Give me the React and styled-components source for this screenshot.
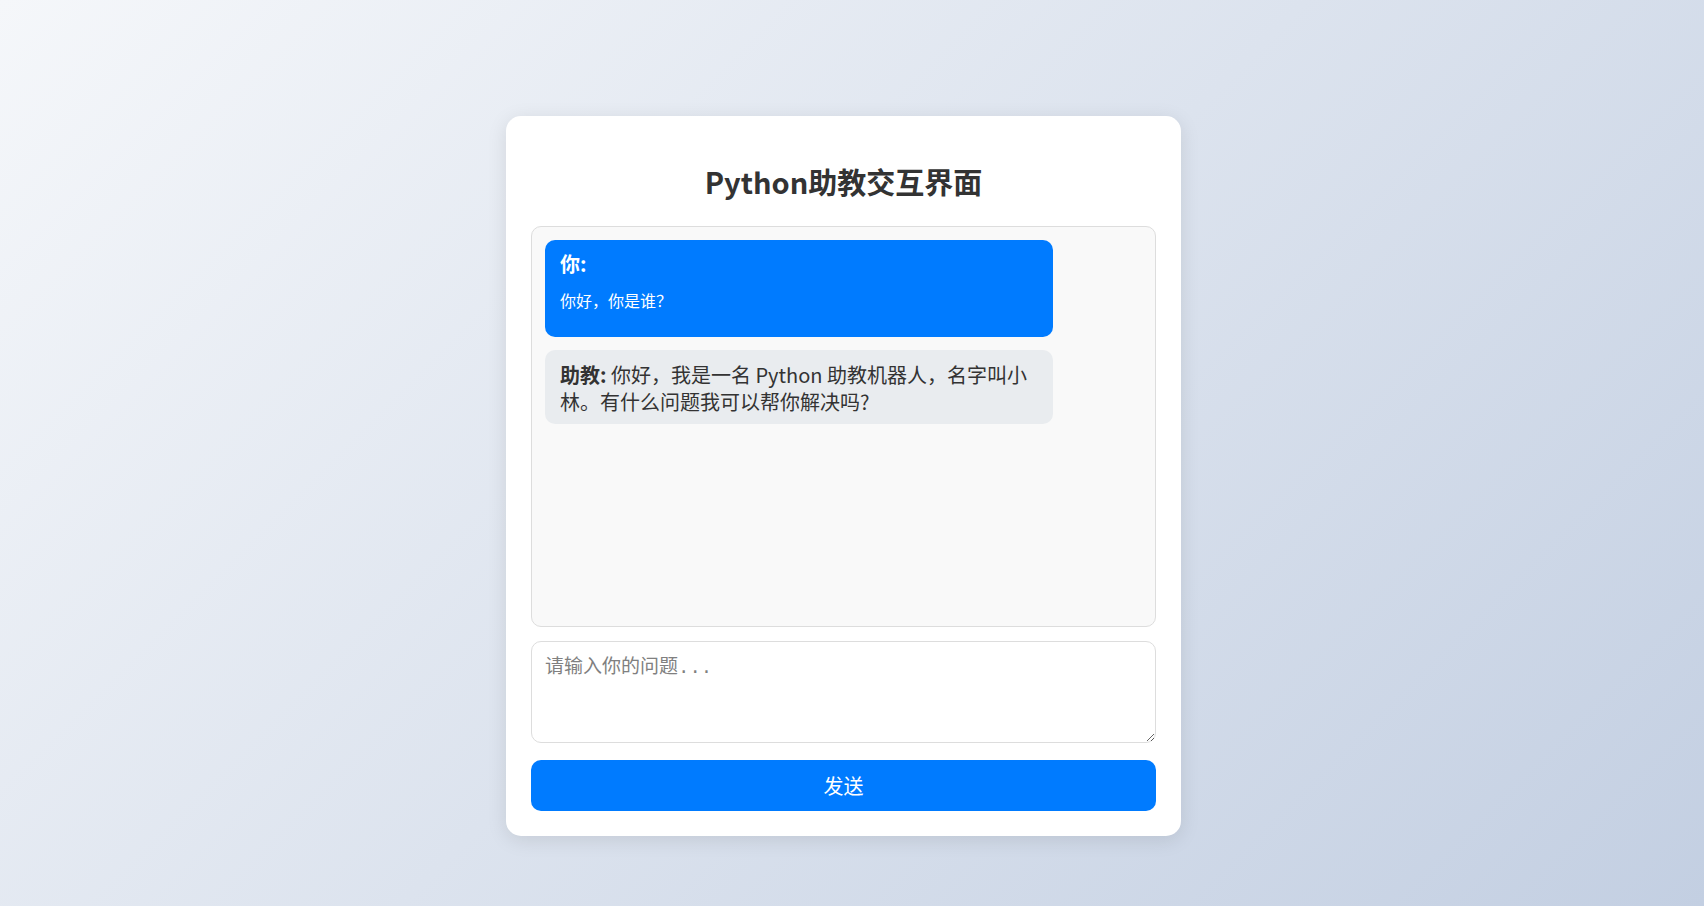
import React, { useState } from "react";
import styled, { createGlobalStyle } from "styled-components";

const GlobalStyle = createGlobalStyle`
  html, body {
    margin: 0;
    padding: 0;
    overflow: hidden;
  }
  body {
    font-family: "Noto Sans CJK SC", "Noto Sans", sans-serif;
    background: linear-gradient(135deg, #f5f7fa 0%, #c3cfe2 100%);
    min-height: 100vh;
  }
`;

const Page = styled.div`
  box-sizing: border-box;
  height: 100vh;
  display: flex;
  justify-content: center;
  align-items: flex-start;
  padding: 116px 17px 0 0;
`;

const Card = styled.div`
  box-sizing: border-box;
  width: 675px;
  padding: 25px;
  background: #fff;
  border-radius: 15px;
  box-shadow: 0 4px 20px rgba(0, 0, 0, 0.1);
  display: flex;
  flex-direction: column;
`;

const Title = styled.h1`
  margin: 23px 0 28px;
  font-size: 29px;
  line-height: 34px;
  font-weight: 700;
  color: #333;
  text-align: center;
`;

const ChatBox = styled.div`
  box-sizing: border-box;
  height: 401px;
  padding: 13px 13px 12px;
  background: #f9f9f9;
  border: 1px solid #ddd;
  border-radius: 10px;
  overflow-y: auto;
`;

const Bubble = styled.div`
  max-width: 80%;
  padding: ${p => (p.$user ? "10px 15px" : "11px 15px 9px")};
  margin-bottom: 13px;
  border-radius: 10px;
  font-size: 20px;
  line-height: 27px;
  background: ${p => (p.$user ? "#007bff" : "#e9ecef")};
  color: ${p => (p.$user ? "#fff" : "#333")};
`;

const Who = styled.strong`
  font-weight: 700;
`;

const BubbleText = styled.p`
  margin: 13px 0 17px;
  font-size: 16px;
  line-height: 20px;
`;

const Input = styled.textarea`
  box-sizing: border-box;
  display: block;
  width: 100%;
  height: 102px;
  margin-top: 14px;
  padding: 15px 13px 10px;
  border: 1px solid #ddd;
  border-radius: 10px;
  font-family: "Liberation Mono", "Noto Sans CJK SC", monospace;
  font-size: 19px;
  line-height: 23px;
  color: #333;
  background: #fff;
  outline: none;
  &::placeholder {
    color: #808080;
  }
`;

const SendButton = styled.button`
  box-sizing: border-box;
  margin-top: 17px;
  width: 100%;
  height: 51px;
  border: none;
  border-radius: 10px;
  background: #007bff;
  color: #fff;
  font-family: "Noto Sans CJK SC", sans-serif;
  font-size: 20px;
  cursor: pointer;
`;

export default function App() {
  const [text, setText] = useState("");
  const messages = [
    { user: true, text: "你好，你是谁？" },
    {
      user: false,
      text: "你好，我是一名 Python 助教机器人，名字叫小林。有什么问题我可以帮你解决吗?"
    }
  ];

  return (
    <>
      <GlobalStyle />
      <Page>
        <Card>
          <Title>Python助教交互界面</Title>
          <ChatBox>
            {messages.map((m, i) =>
              m.user ? (
                <Bubble $user key={i}>
                  <Who>你:</Who>
                  <BubbleText>{m.text}</BubbleText>
                </Bubble>
              ) : (
                <Bubble key={i}>
                  <Who>助教:</Who> {m.text}
                </Bubble>
              )
            )}
          </ChatBox>
          <Input
            placeholder="请输入你的问题..."
            value={text}
            onChange={e => setText(e.target.value)}
          />
          <SendButton>发送</SendButton>
        </Card>
      </Page>
    </>
  );
}
